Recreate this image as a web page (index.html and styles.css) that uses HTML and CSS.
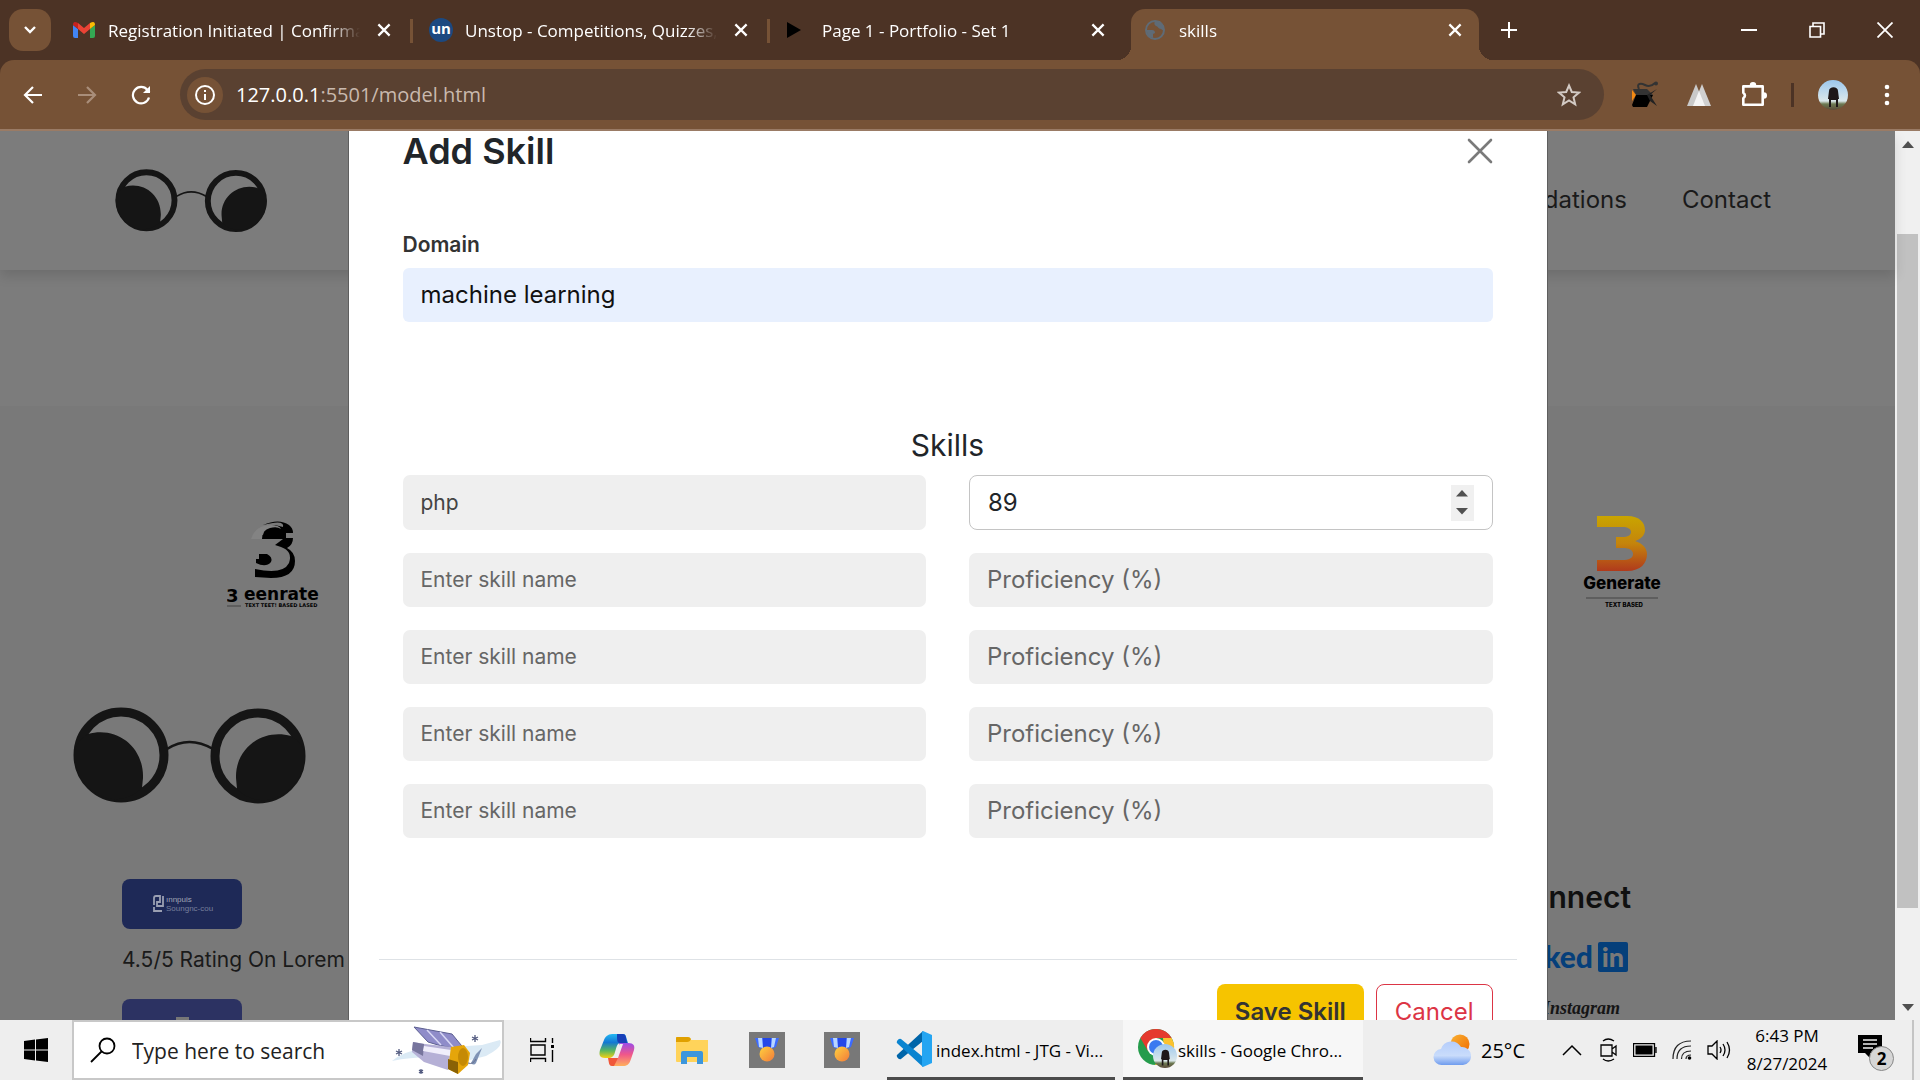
FILE: index.html
```html
<!DOCTYPE html>
<html lang="en">
<head>
<meta charset="utf-8">
<title>skills</title>
<link rel="stylesheet" href="styles.css">
</head>
<body>
<svg class="defs" aria-hidden="true">
  <defs>
    <symbol id="glasses" viewBox="0 0 234 98">
      <g fill="none" stroke="#151515">
        <circle cx="48" cy="48" r="43" stroke-width="9"/>
        <circle cx="185" cy="49" r="43" stroke-width="9"/>
        <path d="M94 42q22 -14 46 0" stroke-width="2.5"/>
      </g>
      <path fill="#151515" d="M15 27c28-8 56 12 55 44l-1 10c-8 8-19 12-30 11-20-3-37-20-38-43 0-8 4-16 14-22zM218 29c-28-8-56 12-55 42l1 11c8 8 18 12 30 11 20-3 37-20 38-43 0-8-4-15-14-21z"/>
    </symbol>
    <symbol id="x" viewBox="0 0 16 16"><path d="M3 3l10 10M13 3L3 13" fill="none" stroke="currentColor" stroke-width="2"/></symbol>
    <symbol id="medal" viewBox="0 0 36 36">
      <path fill="#3d6bff" d="M6 6h24l-3 9-5 2h-8l-5-2z"/><path fill="#b9d6ff" d="M9 6h4l1 10-4-1zM23 6h4l-2 9-3 1z"/><path fill="#2447e8" d="M14 6h8v10h-8z"/>
      <circle cx="18" cy="22" r="7.5" fill="url(#gold)"/>
    </symbol>
    <linearGradient id="gold" x1="0" y1="0" x2="1" y2="1"><stop offset="0" stop-color="#ffd23f"/><stop offset="1" stop-color="#f27a3a"/></linearGradient>
    <linearGradient id="fire" x1="0" y1="0" x2="0" y2="1"><stop offset="0" stop-color="#c9a500"/><stop offset=".5" stop-color="#c4840c"/><stop offset="1" stop-color="#b03a1c"/></linearGradient>
    <linearGradient id="cloud" x1="0" y1="0" x2="0" y2="1"><stop offset="0" stop-color="#b5cdfb"/><stop offset=".6" stop-color="#c9dcfb"/><stop offset="1" stop-color="#6f9cee"/></linearGradient>
    <linearGradient id="sun" x1="0" y1="0" x2="1" y2="1"><stop offset="0" stop-color="#f9b233"/><stop offset="1" stop-color="#f06a00"/></linearGradient>
    <linearGradient id="cp1" x1="0" y1="0" x2="0" y2="1"><stop offset="0" stop-color="#23b8f2"/><stop offset=".35" stop-color="#1478d4"/><stop offset=".7" stop-color="#5cb85c"/><stop offset="1" stop-color="#f5d012"/></linearGradient>
    <linearGradient id="cp2" x1="0" y1="0" x2="0" y2="1"><stop offset="0" stop-color="#9a4be8"/><stop offset=".5" stop-color="#f0578a"/><stop offset="1" stop-color="#ffb05c"/></linearGradient>
    <linearGradient id="sky" x1="0" y1="0" x2="0" y2="1"><stop offset="0" stop-color="#9cc8ee"/><stop offset=".7" stop-color="#dbe7ea"/><stop offset=".8" stop-color="#6d7a52"/><stop offset="1" stop-color="#5a4a38"/></linearGradient>
    <symbol id="avatar" viewBox="0 0 30 30">
      <circle cx="15" cy="15" r="15" fill="url(#sky)"/>
      <path fill="#1e1718" d="M11 11c0-5 9-5 9 0l1 8h-1v8h-2v-7h-5v7h-2v-8h-1z"/>
    </symbol>
  </defs>
</svg>

<header class="browser">
  <div class="tabs">
    <button class="tab-search" aria-label="Search tabs"><svg width="14" height="14" viewBox="0 0 14 14"><path d="M2 4l5 5 5-5" fill="none" stroke="#fff" stroke-width="2.4"/></svg></button>
    <div class="tab">
      <svg class="favicon" viewBox="0 0 24 24"><path fill="#4285f4" d="M1 7l5 4v9H3q-2 0-2-2z"/><path fill="#34a853" d="M18 11l5-4v11q0 2-2 2h-3z"/><path fill="#fbbc04" d="M18 5q5-3 5 2l-5 4z"/><path fill="#c5221f" d="M6 5Q1 2 1 7l5 4z"/><path fill="#ea4335" d="M6 5l6 5 6-5v6l-6 5-6-5z"/></svg>
      <span class="title">Registration Initiated | Confirmation</span>
      <button class="close" aria-label="Close tab"><svg width="18" height="18"><use href="#x"/></svg></button>
    </div>
    <div class="tab">
      <span class="favicon un">un</span>
      <span class="title">Unstop - Competitions, Quizzes, Hack</span>
      <button class="close" aria-label="Close tab"><svg width="18" height="18"><use href="#x"/></svg></button>
    </div>
    <div class="tab">
      <svg class="favicon" viewBox="0 0 24 24"><path d="M1 4l14 8-14 8z" fill="#000"/></svg>
      <span class="title">Page 1 - Portfolio - Set 1</span>
      <button class="close" aria-label="Close tab"><svg width="18" height="18"><use href="#x"/></svg></button>
    </div>
    <div class="tab active">
      <svg class="favicon" viewBox="0 0 24 24"><circle cx="12" cy="12" r="9" fill="none" stroke="#5f6b76" stroke-width="2"/><path fill="#5f6b76" d="M12 3c-1 2-1 4 1 5 2 0 2 3 5 3l3 2V8l-4-5zM3 12h6q3 0 3 3l-2 1v4l-4-1z"/></svg>
      <span class="title">skills</span>
      <button class="close" aria-label="Close tab"><svg width="18" height="18"><use href="#x"/></svg></button>
    </div>
    <button class="new-tab" aria-label="New tab"><svg width="18" height="18" viewBox="0 0 18 18"><path d="M9 1v16M1 9h16" stroke="#fff" stroke-width="2"/></svg></button>
    <div class="window">
      <button aria-label="Minimize"><svg width="16" height="16" viewBox="0 0 16 16"><path d="M0 8h16" stroke="#fff" stroke-width="2"/></svg></button>
      <button aria-label="Restore"><svg width="16" height="16" viewBox="0 0 16 16"><path d="M1 4.500h10.500v10.500H1zM4 4V1h11v11h-3" fill="none" stroke="#fff" stroke-width="1.600"/></svg></button>
      <button aria-label="Close"><svg width="16" height="16" viewBox="0 0 16 16"><path d="M.5.5l15 15M15.500.5l-15 15" stroke="#fff" stroke-width="1.800"/></svg></button>
    </div>
  </div>
  <div class="toolbar">
    <div class="nav-buttons">
      <button aria-label="Back"><svg width="20" height="20" viewBox="0 0 20 20"><path d="M19 10H2M10 2l-8 8 8 8" fill="none" stroke="#fff" stroke-width="2.200"/></svg></button>
      <button aria-label="Forward"><svg width="20" height="20" viewBox="0 0 20 20"><path d="M1 10h17M10 2l8 8-8 8" fill="none" stroke="#a98e7a" stroke-width="2.200"/></svg></button>
      <button aria-label="Reload"><svg width="20" height="20" viewBox="0 0 20 20"><path d="M18 12.500a8.200 8.200 0 1 1-1.500-7.500l2 2" fill="none" stroke="#fff" stroke-width="2.200"/><path d="M19 1v7h-7z" fill="#fff"/></svg></button>
    </div>
    <div class="omnibox">
      <button class="info" aria-label="Site information"><svg width="22" height="22" viewBox="0 0 22 22"><circle cx="11" cy="11" r="9" fill="none" stroke="#fff" stroke-width="2"/><path d="M11 10v6M11 6v2" stroke="#fff" stroke-width="2"/></svg></button>
      <span class="url"><b>127.0.0.1</b>:5501/model.html</span>
      <button class="star" aria-label="Bookmark"><svg width="24" height="24" viewBox="0 0 24 24"><path d="M12 2.500l2.800 6.500 7.200.6-5.500 4.700 1.700 7-6.200-3.800-6.200 3.800 1.700-7L2 9.600 9.200 9z" fill="none" stroke="#d3cac4" stroke-width="2"/></svg></button>
    </div>
    <div class="extensions">
      <button aria-label="Extension"><svg width="28" height="28" viewBox="0 0 28 28"><path d="M2 8h14l6 6H5z" fill="#333"/><path d="M1 9l4 5-4 6z" fill="#f58a12"/><path d="M5 14h17l-6 12H2l-1-2z" fill="#000"/><path d="M26 8l-7 6 7 11-7-5-3-6z" fill="#222"/><path d="M8 8c-3-6 2-6 6-4s7 1 10-2" fill="none" stroke="#333" stroke-width="2"/><circle cx="25" cy="2.500" r="2" fill="#333"/></svg></button>
      <button aria-label="Extension"><svg width="26" height="26" viewBox="0 0 26 26"><path d="M1 24L10 2l9 22z" fill="#c9c9c9"/><path d="M7 24l9-22 9 22z" fill="#d0d0d0"/><path d="M7 24l6-15 6 15z" fill="#f4f4f4"/></svg></button>
      <button aria-label="Extensions"><svg width="28" height="28" viewBox="0 0 26 26"><path d="M4 5h18v17H4v-6q3-2.500 0-5z" fill="none" stroke="#fff" stroke-width="2.400" stroke-linejoin="round"/><path d="M10 4a3 3 0 0 1 6 0zM23 10.500a3 3 0 0 1 0 6z" fill="#fff"/></svg></button>
      <i></i>
      <button class="profile" aria-label="Profile"><svg width="30" height="30"><use href="#avatar"/></svg></button>
      <button aria-label="Menu"><svg width="6" height="22" viewBox="0 0 6 22"><g fill="#fff"><circle cx="3" cy="3" r="2.300"/><circle cx="3" cy="11" r="2.300"/><circle cx="3" cy="19" r="2.300"/></g></svg></button>
    </div>
  </div>
</header>

<main class="viewport">
  <div class="page">
    <nav class="navbar">
      <svg class="logo" width="153" height="64"><use href="#glasses"/></svg>
      <div class="links"><a href="#">Recommendations</a><a href="#">Contact</a></div>
    </nav>
    <section class="hero"></section>
    <section class="lower">
      <div class="partners">
        <svg width="94" height="92" viewBox="0 0 94 92">
          <path fill="#000" d="M36 9Q52 2 62 9q4 3 4 8h-7v5h7q0 7-6 10 8 4 8 13 0 17-24 17l-16-1v-8q28 6 34-6 4-12-8-16l-6-2 8-6H30v-4h6q2-10 12-10l8 2q2-8-20-2z"/>
          <path fill="#838383" d="M24 23q4-14 20-14 8 0 10 4-4-3-11-1-8 2-8 11z"/>
          <path fill="#000" d="M29 43h3v-5h8q6 3 4 8-5 6-15 1z"/>
          <text x="-1" y="86" class="wide" font-size="18">3</text>
          <text x="17" y="84" class="wide" font-size="17">eenrate</text>
          <path d="M0 90h14" stroke="#444"/>
          <text x="18" y="91" class="wide" font-size="5">TEXT TEET! BASED LASED</text>
        </svg>
        <svg width="78" height="92" viewBox="0 0 78 92">
          <path fill="url(#fire)" d="M14 0h30c13 0 18 7 18 14 0 5-4 9-10 11 7 2 12 7 12 13 0 9-6 17-20 17H14V44h25c7 0 11-2 11-6s-4-6-10-6h-7V21h6c6 0 9-2 9-5s-3-5-9-5H14z"/>
          <text x="39" y="73" class="art" font-size="17" text-anchor="middle">Generate</text>
          <path d="M3 82h72" stroke="#444"/>
          <text x="41" y="91" class="art" font-size="6" text-anchor="middle">TEXT BASED</text>
        </svg>
      </div>
      <div class="footer">
        <div class="about">
          <svg class="big-logo" width="234" height="98"><use href="#glasses"/></svg>
          <div class="badge">
            <svg width="64" height="20" viewBox="0 0 64 20"><path d="M4 11V4q0-2 2-2h4v6H7v4h6V2M4 13v4h8" fill="none" stroke="#9a9fb2" stroke-width="1.800"/><text x="16" y="8" font-size="8" class="mark" fill="#a0a5b6">ınnpuis</text><text x="16" y="17" font-size="8" class="mark" fill="#777f9c">Soungnc-cou</text></svg>
          </div>
          <p>4.5/5 Rating On Lorem</p>
          <div class="badge second"><svg width="16" height="16"><rect x="2" y="1" width="13" height="14" fill="#777"/></svg></div>
        </div>
        <div class="connect">
          <h2>Connect</h2>
          <svg width="126" height="32" viewBox="0 0 126 32"><text x="88" y="27" text-anchor="end" class="linked" font-size="30">Linked</text><rect x="93" y="1" width="30" height="30" rx="2" fill="#053f7a"/><text x="108" y="26" text-anchor="middle" class="in" font-size="27">in</text></svg>
          <svg width="126" height="28" viewBox="0 0 126 28"><text x="115" y="17" text-anchor="end" class="insta" font-size="18">Instagram</text></svg>
        </div>
      </div>
    </section>
  </div>

  <form class="modal">
    <div class="head"><h1>Add Skill</h1><button type="button" aria-label="Close"><svg width="26" height="26" viewBox="0 0 26 26"><path d="M2 2l22 22M24 2L2 24" stroke="#7a7a7a" stroke-width="2.600" stroke-linecap="round"/></svg></button></div>
    <label class="domain-label" for="domain">Domain</label>
    <input class="domain" id="domain" value="machine learning">
    <h2>Skills</h2>
    <div class="skills">
      <input class="filled" aria-label="Skill 1" value="php">
      <div class="number">
        <input type="number" aria-label="Proficiency 1" value="89">
        <div class="spin"><button type="button" aria-label="Increase"><svg width="12" height="7"><path d="M0 6.500L6 0l6 6.500z" fill="#505050"/></svg></button><button type="button" aria-label="Decrease"><svg width="12" height="7"><path d="M0 0l6 6.500L12 0z" fill="#505050"/></svg></button></div>
      </div>
      <input aria-label="Skill 2" placeholder="Enter skill name"><input class="pct" type="number" aria-label="Proficiency 2" placeholder="Proficiency (%)">
      <input aria-label="Skill 3" placeholder="Enter skill name"><input class="pct" type="number" aria-label="Proficiency 3" placeholder="Proficiency (%)">
      <input aria-label="Skill 4" placeholder="Enter skill name"><input class="pct" type="number" aria-label="Proficiency 4" placeholder="Proficiency (%)">
      <input aria-label="Skill 5" placeholder="Enter skill name"><input class="pct" type="number" aria-label="Proficiency 5" placeholder="Proficiency (%)">
    </div>
    <div class="actions"><button type="button" class="save">Save Skill</button><button type="button" class="cancel">Cancel</button></div>
  </form>

  <div class="scrollbar">
    <svg width="12" height="7"><path d="M0 7l6-7 6 7z" fill="#505050"/></svg>
    <div class="track"><div class="thumb"></div></div>
    <svg width="12" height="7"><path d="M0 0l6 7 6-7z" fill="#505050"/></svg>
  </div>
</main>

<footer class="taskbar">
  <button class="start" aria-label="Start"><svg width="24" height="24" viewBox="0 0 24 24"><path d="M0 3l11-1.500V11.500H0zM12 1.500L24 0v11.500H12zM0 12.500h11v10L0 21zM12 12.500h12V24l-12-1.500z"/></svg></button>
  <label class="search">
    <svg width="26" height="26" viewBox="0 0 26 26"><circle cx="17" cy="9" r="7.500" fill="none" stroke="#000" stroke-width="1.800"/><path d="M11.500 14.500L1 25" stroke="#000" stroke-width="1.800"/></svg>
    <input placeholder="Type here to search" aria-label="Type here to search">
    <svg width="110" height="50" viewBox="0 0 110 50">
      <path d="M0 36q12-10 30-12l60-4 18-5q4 7-14 16l-24 6Q40 28 0 36z" fill="#dbeaf5"/>
      <path d="M22 2l38 7 14 17-28-6-10-3z" fill="#8f8cc9" stroke="#5c5f91"/><path d="M35 5l14 15M48 7l14 16" stroke="#d8d8f4" stroke-width="1.500"/>
      <path d="M21 17l12 2 26 3-3 23-24-8-12-10z" fill="#b5b0d6"/><path d="M21 17l11 2-1 12-11-6z" fill="#77759d"/><path d="M32 21l27 4-1 6-27-5z" fill="#f0eefb"/>
      <path d="M59 22l13-2 6 8-2 12-10 9-10-5z" fill="#e5a50a"/><path d="M56 34l10 3v12l-10-5z" fill="#8a6206"/><ellipse cx="71" cy="32" rx="5" ry="9" fill="#c58a05"/>
      <path d="M90 23l-6 15q-2 3-5 0l5-9z" fill="#7f93b5"/><path d="M76 38q5 2 8-4" fill="none" stroke="#66708f"/>
      <path d="M7 24v7M4 26l6 3M10 26l-6 3M83 10v7M80 12l6 3M86 12l-6 3M29 44v5M27 45l4 3M31 45l-4 3" stroke="#535b80" stroke-width="1.300"/>
    </svg>
  </label>
  <button class="app" aria-label="Task view"><svg width="24" height="24" viewBox="0 0 24 24"><path d="M1 7h14v10H1zM.5 0v3.500h15V0M.5 24v-3.500h15V24M22.500 0v5M22.500 12v12" fill="none" stroke="#000" stroke-width="1.400"/><path d="M21 7h3v3h-3z"/></svg></button>
  <button class="app" aria-label="Copilot"><svg width="36" height="36" viewBox="0 0 36 36"><path d="M20 11h9c6 0 7 3 6 7l-3 9c-2 6-4 7-8 7H11c4 0 5-4 6-8l4-12z" fill="url(#cp2)"/><path d="M15 2h9c3 0 3 3 4 6l1 3h-7c-4 0-4 3-6 9-1 4-3 6-7 6H6c-6 0-6-4-5-8L5 8c2-5 5-6 10-6z" fill="url(#cp1)"/><path d="M18 2h6c3 0 3 3 4 9h-7c-3 0-3-3-3-9z" fill="#173fb8"/><path d="M9 26h10l-4 8h-2c-3 0-3-3-4-8z" fill="#f0573a"/><path d="M21 12h3l-5 14h-4q2-2 3-6z" fill="#eee"/></svg></button>
  <button class="app" aria-label="File Explorer"><svg width="32" height="28" viewBox="0 0 32 28"><path d="M0 2q0-1 1-1h11q2 0 3 3H32v21q0 1-1 1H1q-1 0-1-1z" fill="#ffd35a"/><path d="M0 2q0-1 1-1h11q2 0 3 2-1 3-4 3H0z" fill="#e0a000"/><path d="M5 28V17q0-2 2-2h18q2 0 2 2v11h-6v-7H11v7z" fill="#3c96dc"/></svg></button>
  <button class="app" aria-label="Achievements"><svg class="medal" width="36" height="36"><use href="#medal"/></svg></button>
  <button class="app" aria-label="Achievements"><svg class="medal" width="36" height="36"><use href="#medal"/></svg></button>
  <button class="task code"><svg width="36" height="36" viewBox="0 0 36 36"><path d="M27 0v10L5 28q-2 1-4-2-1-2 1-3z" fill="#0065a9"/><path d="M27 36V26L5 8Q3 7 1 10q-1 2 1 3z" fill="#0a84d0"/><path d="M27 0l9 4v28l-9 4q-1 0-1-2V2q0-2 1-2z" fill="#24a5f2"/></svg><span>index.html - JTG - Vi...</span></button>
  <button class="task chrome"><svg width="40" height="40" viewBox="0 0 40 40"><circle cx="18" cy="18" r="18" fill="#259c4c"/><path d="M2.400 9A18 18 0 0 1 33.600 9H18l-8 13z" fill="#e53a2e"/><path d="M33.600 9A18 18 0 0 1 17 36l9-14-1-13z" fill="#fcc22e"/><circle cx="18" cy="18" r="9" fill="#fff"/><circle cx="18" cy="18" r="7" fill="#3a7af0"/><svg x="15" y="15" width="24" height="24"><use href="#avatar"/></svg></svg><span>skills - Google Chro...</span></button>
  <div class="tray">
    <svg width="38" height="32" viewBox="0 0 38 32"><circle cx="27" cy="10" r="9.500" fill="url(#sun)"/><path d="M9 31a8 8 0 0 1-1-16A11 11 0 0 1 28 13a9 9 0 0 1 2 18z" fill="url(#cloud)"/></svg>
    <span class="temp">25°C</span>
    <svg class="chev" width="20" height="12" viewBox="0 0 20 12"><path d="M1 11l9-9 9 9" fill="none" stroke="#000" stroke-width="1.500"/></svg>
    <svg width="18" height="24" viewBox="0 0 18 24"><path d="M1 7h11v11H1zM12 11l4-3v9l-4-3M3 3q5-4 11 0M3 21q5 4 11 0" fill="none" stroke="#000" stroke-width="1.300"/></svg>
    <svg width="24" height="14" viewBox="0 0 24 14"><path d="M.5.5h21v13H.5zM23 4v6" fill="none" stroke="#000" stroke-width="1.300"/><path d="M2.500 2.500h17v9h-17z"/></svg>
    <svg width="20" height="20" viewBox="0 0 20 20"><path d="M1 19Q1 1 19 1M5 19Q5 6 19 6M9.500 19Q9.500 11 19 11M14 19q0-4 5-4" fill="none" stroke="#222" stroke-width="1.200"/><circle cx="17.500" cy="18" r="1.800"/></svg>
    <svg width="24" height="20" viewBox="0 0 24 20"><path d="M1 6h4l5-5v18l-5-5H1zM13 7q2 3 0 6M16 4q4 6 0 12M20 2q5 8 0 16" fill="none" stroke="#000" stroke-width="1.300"/></svg>
    <div class="clock"><span>6:43 PM</span><span>8/27/2024</span></div>
    <button class="notes" aria-label="Notifications"><svg width="24" height="24" viewBox="0 0 24 24"><path d="M0 0h24v18H12v5l-5-5H0z"/><path d="M5 5h14M5 9h14M5 13h10" stroke="#eee" stroke-width="1.300"/></svg><b>2</b></button>
    <i></i>
  </div>
</footer>
</body>
</html>
```
FILE: styles.css
```css
* { box-sizing: border-box; }
body {
  margin: 0;
  height: 100vh;
  display: flex;
  flex-direction: column;
  overflow: hidden;
  font-family: Inter, "Liberation Sans", sans-serif;
  color: #212529;
}
button { border: 0; padding: 0; background: none; font: inherit; color: inherit; display: grid; place-items: center; }
input { border: 0; font: inherit; min-width: 0; outline: 0; }
svg { display: block; flex: none; }
h1, h2, p { margin: 0; }
a { color: inherit; text-decoration: none; }
.defs { position: absolute; width: 0; height: 0; }

/* browser chrome */
.browser { background: #4c3325; font-family: "Open Sans", "Noto Sans", sans-serif; color: #fff; flex: none; }
.tabs { display: flex; height: 60px; padding-top: 9px; }
.tab-search { width: 42px; height: 42px; margin: 0 5px 0 9px; border-radius: 14px; background: #765236; }
.tab { width: 357px; height: 42px; display: flex; align-items: center; gap: 12px; padding: 0 17px 0 16px; position: relative; }
.tab:nth-child(2)::after, .tab:nth-child(3)::after { content: ""; position: absolute; right: 0; top: 10px; width: 3px; height: 24px; background: #765236; }
.favicon { width: 24px; height: 24px; flex: none; }
.un { border-radius: 50%; background: #1c4980; font-size: 15px; font-weight: 700; line-height: 21px; text-align: center; }
.title { flex: 1; padding-top: 2px; font-size: 17px; line-height: 24px; white-space: nowrap; overflow: hidden; mask-image: linear-gradient(to right, #000 88%, transparent); }
.close { width: 24px; height: 24px; }
.active { width: 348px; height: 51px; margin-left: 4px; padding: 0 12px 9px; background: #765236; border-radius: 14px 14px 0 0; }
.active::before, .active::after { content: ""; position: absolute; bottom: 0; width: 14px; height: 14px; }
.active::before { left: -14px; background: radial-gradient(circle at 0 0, transparent 14px, #765236 14px); }
.active::after { right: -14px; background: radial-gradient(circle at 100% 0, transparent 14px, #765236 14px); }
.new-tab { width: 42px; height: 42px; margin-left: 9px; }
.window { display: flex; margin: 0 1px 0 auto; }
.window button { width: 68px; height: 42px; }
.toolbar { display: flex; align-items: center; height: 71px; background: #765236; border-bottom: 2px solid #9a7b65; border-radius: 14px 14px 0 0; }
.nav-buttons { display: flex; padding-left: 6px; }
.nav-buttons button { width: 54px; height: 42px; }
.omnibox { flex: 1; display: flex; align-items: center; height: 51px; margin-left: 12px; padding: 0 23px 0 7px; border-radius: 26px; background: #5a4131; }
.info { width: 36px; height: 36px; border-radius: 50%; background: #765236; }
.url { flex: 1; margin-left: 13px; font-size: 20px; color: #c9b9ae; }
.url b { font-weight: 400; color: #fff; }
.extensions { display: flex; align-items: center; width: 316px; padding-left: 14px; }
.extensions button { width: 54px; height: 42px; }
.extensions i { width: 3px; height: 24px; margin-left: 11px; background: #4c3325; }
.extensions .profile { margin-left: 12px; }

/* page under the dialog */
.viewport { flex: 1; min-height: 0; display: flex; position: relative; overflow: hidden; background: #797979; }
.page { flex: 1; min-width: 0; display: flex; flex-direction: column; color: #1a1a1a; }
.navbar { height: 139px; flex: none; display: flex; align-items: center; justify-content: space-between; padding: 0 124px 0 115px; background: #7c7c7c; box-shadow: 0 6px 12px rgba(0, 0, 0, .12); z-index: 1; }
.links { display: flex; gap: 55px; font-size: 24px; padding-bottom: 2px; }
.hero { height: 136px; flex: none; background: #7c7c7c; }
.lower { padding-top: 110px; }
.partners { display: flex; justify-content: space-between; padding: 0 234px 0 227px; }
.art { font-family: Inter, sans-serif; font-weight: 800; fill: #000; }
.wide { font-family: "DejaVu Sans", sans-serif; font-weight: 700; fill: #000; }
.footer { display: flex; justify-content: space-between; padding: 0 264px 0 73px; margin-top: 99px; }
.about { padding-left: 49px; }
.big-logo { margin: 0 0 74px -49px; }
.badge { width: 120px; height: 50px; border-radius: 8px; background: #1e2957; display: grid; place-items: center; }
.second { background: #2c3262; }
.mark { font-family: "Liberation Sans", sans-serif; }
.about p { margin: 16px 0 24px; font-size: 21px; line-height: 30px; }
.connect { padding-top: 171px; display: flex; flex-direction: column; align-items: flex-end; }
.connect h2 { font-size: 30px; line-height: 38px; font-weight: 600; color: #101010; }
.connect svg { margin-top: 25px; }
.connect svg + svg { margin-top: 24px; }
.linked { font-family: Lato, sans-serif; font-weight: 900; fill: #053f7a; }
.in { font-family: Lato, sans-serif; font-weight: 900; fill: #797979; }
.insta { font-family: "Liberation Serif", serif; font-style: italic; font-weight: 700; fill: #151515; }

/* dialog */
.modal { position: absolute; z-index: 2; top: 0; left: 0; right: 25px; width: 1200px; max-width: 100%; margin: 0 auto; padding: 0 54px; background: #fff; border: solid #5e5e5e; border-width: 0 1px; }
.head { display: flex; align-items: center; justify-content: space-between; height: 40px; }
.head h1 { font-size: 36px; line-height: 40px; font-weight: 600; }
.domain-label { display: block; margin-top: 58px; font-size: 21px; line-height: 32px; font-weight: 600; color: #333; }
.domain { display: block; width: 100%; height: 54px; margin-top: 7px; padding: 0 18px 2px; border-radius: 6px; background: #e8f0fe; font-size: 24px; color: #111; }
.modal h2 { margin-top: 103px; font-size: 30px; line-height: 40px; font-weight: 400; text-align: center; }
.skills { display: grid; grid-template-columns: 1fr 1fr; gap: 23px 43px; margin-top: 10px; }
.skills > input { height: 54px; padding: 0 18px 2px; border-radius: 7px; background: #efefef; font-size: 21px; color: #444; }
.skills > .filled { height: 55px; padding-bottom: 0; }
.skills > .pct { font-size: 24px; }
.skills input::placeholder { color: #666; opacity: 1; }
.number { display: flex; align-items: center; height: 55px; padding: 0 18px; border: 1px solid #c4c4c4; border-radius: 8px; }
.number input { flex: 1; font-size: 24px; color: #212529; padding: 0; }
input[type=number] { appearance: textfield; }
.spin { display: grid; grid-template-rows: 1fr 1fr; width: 23px; height: 36px; background: #f0f0f0; }
.actions { display: flex; justify-content: flex-end; align-items: flex-start; gap: 12px; margin: 121px -24px 0; padding: 24px 24px 40px; border-top: 1px solid #dee2e6; }
.actions button { height: 54px; padding: 0 18px; border-radius: 8px; font-size: 24px; }
.save { background: #f6c400; color: #333; font-weight: 600; }
.cancel { border: 1px solid #dc3545; color: #dc3545; }

.scrollbar { width: 25px; flex: none; display: flex; flex-direction: column; align-items: center; padding: 10px 0 9px; background: #f0f0f0; }
.track { flex: 1; width: 21px; padding: 86px 0 96px; display: flex; }
.thumb { flex: 1; background: #c1c1c1; }

/* taskbar */
.taskbar { height: 60px; flex: none; display: flex; background: #eee; font-family: "Open Sans", "Noto Sans", sans-serif; color: #000; }
.start { width: 72px; }
.search { width: 432px; display: flex; align-items: center; padding: 0 0 0 16px; border: 2px solid #c8c8c8; background: #fff; }
.search input { flex: 1; margin-left: 16px; padding: 2px 0 0; font-size: 21px; background: none; }
.search input::placeholder { color: #222; opacity: 1; }
.app { width: 75px; }
.medal { background: #787878; }
.task { display: flex; align-items: center; gap: 4px; font-size: 17px; white-space: nowrap; border-bottom: 3px solid #4b4b4b; }
.task span { padding-top: 4px; }
.code { width: 228px; margin-left: 8px; padding-left: 9px; }
.chrome { width: 240px; margin-left: 8px; padding-left: 15px; gap: 0; background: #f7f7f7; }
.tray { margin-left: auto; display: flex; align-items: center; gap: 15px; }
.temp { font-size: 20px; margin-left: -5px; }
.chev { margin: 0 3px 0 22px; }
.clock { display: flex; flex-direction: column; width: 86px; margin-left: -2px; text-align: center; font-size: 17px; line-height: 28px; }
.notes { width: 36px; height: 36px; position: relative; margin: 6px 0 0 13px; place-items: start; }
.notes b { position: absolute; right: 0; bottom: 0; width: 25px; height: 25px; border: 1px solid #888; border-radius: 50%; background: #d6d6d6; font-size: 17px; line-height: 23px; text-align: center; }
.tray i { width: 2px; height: 60px; margin: 0 6px 0 3px; background: #c4c4c4; }
```
